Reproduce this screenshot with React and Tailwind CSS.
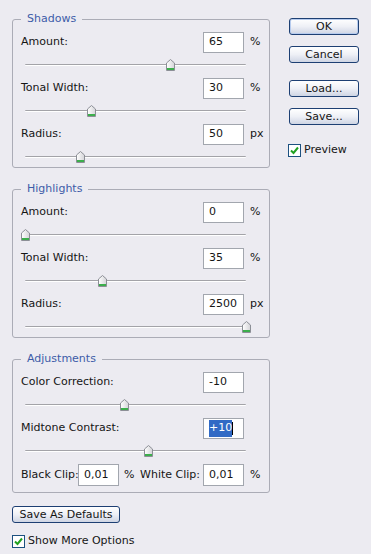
import React from "react";

const Thumb = ({ pos }) => (
  <svg
    className="absolute top-[-6px] ml-[-4px]"
    style={{ left: `${pos * 100}%` }}
    width="9"
    height="12"
    viewBox="0 0 9 12"
  >
    <defs>
      <linearGradient id="thumbfill" x1="0" y1="0" x2="1" y2="0">
        <stop offset="0" stopColor="#ffffff" />
        <stop offset="1" stopColor="#d4d4d8" />
      </linearGradient>
    </defs>
    <path d="M0.5 4 L4.5 0.5 L8.5 4 L8.5 11.5 L0.5 11.5 Z" fill="url(#thumbfill)" stroke="#8c8f96" />
    <rect x="1" y="9" width="7" height="2" fill="#3cae4c" />
  </svg>
);

const Slider = ({ pos, last }) => (
  <div className={(last ? "h-[22px]" : "h-[25px]") + " pl-[4px] pr-[23px] pt-[11px]"}>
    <div className="relative h-[2px] border-t border-[#a3a3a8] bg-white rounded-full">
      <Thumb pos={pos} />
    </div>
  </div>
);

const Field = ({ children, w = "w-[41px]", h = "h-[21px]" }) => (
  <div className={w + " " + h + " shrink-0 border border-[#a2a6ae] bg-white pl-[5px] flex items-center"}>
    {children}
  </div>
);

const Row = ({ label, value, unit }) => (
  <div className="flex items-center h-[21px]">
    <span className="flex-1">{label}</span>
    <Field>{value}</Field>
    <span className="w-[25px] pl-[6px]">{unit}</span>
  </div>
);

const Group = ({ title, children }) => (
  <fieldset className="border border-[#abacb6] rounded-[3px] pl-[8px] pt-[6px]">
    <legend className="px-[6px] leading-[14px] text-[#3d5ca8]">{title}</legend>
    {children}
  </fieldset>
);

const Button = ({ children, def, className = "" }) => (
  <button
    className={
      "h-[17px] border border-[#1d3f73] rounded-[3px] bg-linear-to-b from-white via-[#eef0f6] to-[#cfd5e4] leading-[15px] text-center " +
      (def ? "shadow-[inset_0_0_0_1px_#b6cbee] " : "") +
      className
    }
  >
    {children}
  </button>
);

const Check = ({ label }) => (
  <div className="flex items-center">
    <div className="w-[13px] h-[13px] border border-[#1c5180] bg-white flex items-center justify-center">
      <svg width="9" height="9" viewBox="0 0 9 9">
        <path d="M1 4.5 L3.5 7 L8 1.5" fill="none" stroke="#21a121" strokeWidth="2" />
      </svg>
    </div>
    <span className="ml-[3px]">{label}</span>
  </div>
);

export default function App() {
  return (
    <div className="w-[371px] h-[554px] bg-[#ecebf1] flex font-['DejaVu_Sans',sans-serif] text-[11px] text-[#151515]">
      <div className="w-[258px] ml-[12px] pt-[12px] flex flex-col">
        <Group title="Shadows">
          <Row label="Amount:" value="65" unit="%" />
          <Slider pos={0.655} />
          <Row label="Tonal Width:" value="30" unit="%" />
          <Slider pos={0.3} />
          <Row label="Radius:" value="50" unit="px" />
          <Slider pos={0.25} last />
        </Group>

        <div className="h-[14px]" />
        <Group title="Highlights">
          <Row label="Amount:" value="0" unit="%" />
          <Slider pos={0} />
          <Row label="Tonal Width:" value="35" unit="%" />
          <Slider pos={0.35} />
          <Row label="Radius:" value="2500" unit="px" />
          <Slider pos={1} last />
        </Group>

        <div className="h-[14px]" />
        <Group title="Adjustments">
          <Row label="Color Correction:" value="-10" unit="" />
          <Slider pos={0.45} />
          <Row
            label="Midtone Contrast:"
            value={
              <span className="flex items-center">
                <span className="bg-[#316ac5] text-white">+10</span>
                <span className="w-px h-[13px] bg-black" />
              </span>
            }
            unit=""
          />
          <Slider pos={0.555} />
          <div className="flex items-center h-[22px] mb-[6px] whitespace-nowrap">
            <span className="w-[57px] shrink-0">Black Clip:</span>
            <Field h="h-[22px]">0,01</Field>
            <span className="ml-[5px]">%</span>
            <span className="ml-auto">White Clip:</span>
            <div className="ml-[3px]">
              <Field h="h-[22px]">0,01</Field>
            </div>
            <span className="w-[25px] pl-[6px]">%</span>
          </div>
        </Group>

        <Button className="mt-[13px] w-[108px] h-[16px] leading-[14px]">Save As Defaults</Button>
        <div className="mt-[10px]">
          <Check label="Show More Options" />
        </div>
      </div>

      <div className="ml-[19px] pt-[18px] w-[70px] flex flex-col">
        <Button def>OK</Button>
        <Button className="mt-[11px]">Cancel</Button>
        <Button className="mt-[17px]">Load...</Button>
        <Button className="mt-[11px]">Save...</Button>
        <div className="mt-[17px] -ml-px">
          <Check label="Preview" />
        </div>
      </div>
    </div>
  );
}
